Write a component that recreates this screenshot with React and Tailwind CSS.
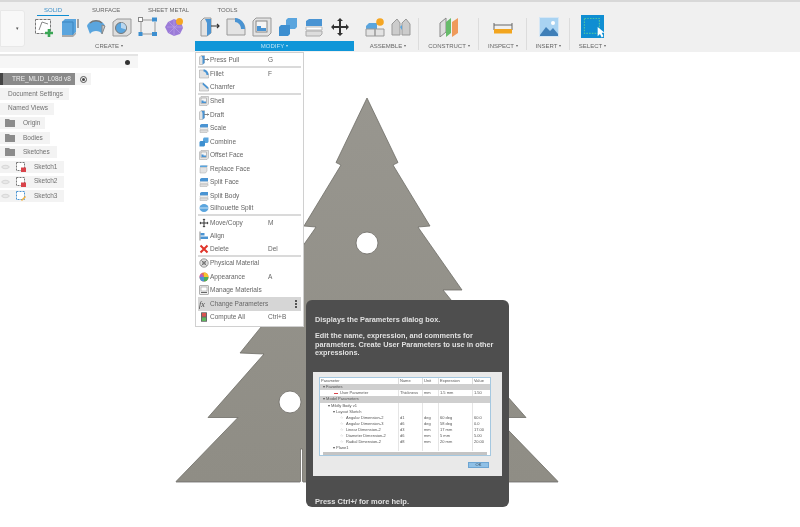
import React from 'react';

const font = { fontFamily: '"Liberation Sans", Arial, sans-serif' };

// toolbar + menu icons, all on a 20x20 box
const icons = {
  sketch: (
    <>
      <rect x="1.5" y="2.5" width="15" height="14" fill="#fff" stroke="#777" strokeDasharray="3 1" />
      <path d="M5 13l3-8 6 2" fill="none" stroke="#888" />
      <path d="M15 12v8M11 16h8" stroke="#3aa655" strokeWidth="2.6" />
    </>
  ),
  extrude: (
    <>
      <path d="M2 5l3-3h11v13l-3 3H2z" fill="#5aa5de" />
      <path d="M2 5h11v13" fill="none" stroke="#3b85c0" />
      <path d="M2 18h11l3-3v2l-3 3H2z" fill="#aaa" />
      <path d="M18 2v9" stroke="#555" />
    </>
  ),
  revolve: (
    <>
      <path d="M1 9c2-7 16-7 18 0l-3 8c-2-4-10-4-12 0z" fill="#5aa5de" />
      <path d="M4 6c3-3 9-3 12 0" fill="none" stroke="#777" strokeWidth="1.4" />
      <path d="M16 8l3 1-3 8z" fill="#ccc" stroke="#888" />
    </>
  ),
  hole: (
    <>
      <path d="M1 5l4-3h14v14l-4 3H1z" fill="#ddd" stroke="#999" />
      <circle cx="9" cy="11" r="5.5" fill="#5aa5de" stroke="#777" />
      <path d="M9 11V5.5a5.5 5.5 0 0 1 5 7z" fill="#b9d6ee" />
    </>
  ),
  pattern: (
    <>
      <path d="M4 3h12M3 5v10M17 5v10M4 17h12" stroke="#999" />
      <rect x="0.5" y="0.5" width="4" height="4" fill="#fff" stroke="#888" />
      <rect x="14" y="0.5" width="5" height="4" fill="#3d8fd0" />
      <rect x="0.5" y="15" width="4" height="4" fill="#3d8fd0" />
      <rect x="14" y="15" width="5" height="4" fill="#3d8fd0" />
    </>
  ),
  mesh: (
    <>
      <path d="M4 5l6-3 7 3 2 6-3 6-6 2-6-3-3-6z" fill="#9b7bd8" />
      <path d="M3 10h16M10 2v17M5 5l11 11M16 5L5 16" stroke="#b9a2e6" strokeWidth="0.7" />
      <circle cx="15.5" cy="4.5" r="3.5" fill="#f5a623" />
    </>
  ),
  presspull: (
    <>
      <path d="M1 4l3-3h7v15l-4 3H1z" fill="#e3e3e3" stroke="#999" />
      <path d="M5 2h6v14l-4 3V6z" fill="#4a94d3" />
      <path d="M11 9h8M17 7l2 2-2 2" fill="none" stroke="#333" strokeWidth="1.2" />
    </>
  ),
  fillet: (
    <>
      <path d="M1 18V2h8c6 0 10 5 10 10v6z" fill="#e3e3e3" stroke="#999" />
      <path d="M9 1c6 0 10 5 10 11h-4c0-4-3-7-6-7z" fill="#4a94d3" />
    </>
  ),
  chamfer: (
    <>
      <path d="M1 18V2h7l11 10v6z" fill="#e3e3e3" stroke="#999" />
      <path d="M8 1l11 10-2 3L7 5z" fill="#4a94d3" />
    </>
  ),
  shell: (
    <>
      <path d="M1 4l3-3h15v15l-3 3H1z" fill="#e3e3e3" stroke="#999" />
      <rect x="4" y="4" width="11" height="11" fill="#f5f5f5" stroke="#888" />
      <path d="M5 9h4v2h5v3H5z" fill="#4a94d3" />
    </>
  ),
  combine: (
    <>
      <path d="M8 3l2-2h9v9l-2 2H8z" fill="#5aa5de" />
      <path d="M1 10l2-2h9v9l-2 2H1z" fill="#3d8fd0" />
    </>
  ),
  replace: (
    <>
      <path d="M2 6l3-3h14l-3 3z" fill="#bbb" />
      <path d="M2 3h14v3H2z" fill="#5aa5de" />
      <path d="M2 7h14v7l-3 4H2z" fill="#e3e3e3" stroke="#aaa" />
    </>
  ),
  split: (
    <>
      <path d="M2 4l3-2h13v7H2z" fill="#4a94d3" />
      <path d="M2 10h16v3H2z" fill="#fff" stroke="#bbb" />
      <path d="M2 14h16v3l-2 2H2z" fill="#ddd" stroke="#aaa" />
    </>
  ),
  move: (
    <path d="M10 1l3 3h-2v5h5V7l3 3-3 3v-2h-5v5h2l-3 3-3-3h2v-5H4v2l-3-3 3-3v2h5V4H7z" fill="#333" />
  ),
  assemble: (
    <>
      <path d="M1 9l3-3h8v6H1z" fill="#5aa5de" />
      <path d="M1 12h9v7H1zM10 12h9v7h-9z" fill="#e3e3e3" stroke="#999" />
      <circle cx="15" cy="5" r="3.8" fill="#f5a623" />
    </>
  ),
  joint: (
    <>
      <path d="M1 18V7l5-5 3 4v12z" fill="#ccc" stroke="#999" />
      <path d="M11 18V6l4-4 4 5v11z" fill="#ccc" stroke="#999" />
      <path d="M9 10l2-2v5z" fill="#5aa5de" />
    </>
  ),
  construct: (
    <>
      <path d="M1 6l6-5v14l-6 5z" fill="#ddd" stroke="#888" />
      <path d="M7 5l5-4v15l-5 4z" fill="#67bb6a" />
      <path d="M13 5l6-4v15l-6 4z" fill="#ef9a5b" />
    </>
  ),
  inspect: (
    <>
      <path d="M1 6v7M19 6v7M1 8h18" stroke="#666" fill="none" />
      <rect x="1" y="12" width="18" height="4.5" fill="#f2a51f" />
    </>
  ),
  insert: (
    <>
      <rect x="0.5" y="0.5" width="19" height="19" fill="#a9d3f2" stroke="#d6e7f5" />
      <path d="M1 18l6-8 4 4 3-3 5 6v2H1z" fill="#3f7fb8" />
      <circle cx="14" cy="6" r="2" fill="#fff" />
    </>
  ),
  select: (
    <>
      <rect width="20" height="20" fill="#0f8ed2" />
      <rect x="3" y="3" width="13" height="13" fill="none" stroke="#4cc2a6" strokeDasharray="1.4 1" />
      <path d="M14.5 10.5v8l2-2 1.5 3 1.5-1-1.5-3h2.5z" fill="#fff" />
    </>
  ),
  physical: (
    <>
      <circle cx="10" cy="10" r="8.5" fill="#ddd" stroke="#555" />
      <circle cx="10" cy="10" r="3" fill="#fff" stroke="#555" />
      <path d="M5 5l10 10M15 5L5 15" stroke="#555" strokeWidth="1.5" />
    </>
  ),
  appearance: (
    <>
      <circle cx="10" cy="10" r="9" fill="#e9734d" />
      <path d="M10 10V1a9 9 0 0 1 9 9z" fill="#f4c430" />
      <path d="M10 10h9a9 9 0 0 1-9 9z" fill="#4cae5a" />
      <path d="M10 10v9a9 9 0 0 1-9-9z" fill="#4a94d3" />
      <path d="M10 10H1a9 9 0 0 1 4-7z" fill="#b15dc6" />
    </>
  ),
  materials: (
    <>
      <rect x="1.5" y="1.5" width="17" height="17" fill="#eee" stroke="#666" />
      <rect x="4" y="4" width="12" height="8" fill="#fff" stroke="#888" />
      <path d="M4 15h12" stroke="#666" strokeWidth="2" />
    </>
  ),
  compute: (
    <>
      <rect x="4" y="0.5" width="12" height="19" rx="1" fill="#666" />
      <rect x="6" y="2" width="8" height="7" fill="#d9534f" />
      <rect x="6" y="11" width="8" height="7" fill="#5cb85c" />
    </>
  ),
  align: (
    <>
      <path d="M2 1v18" stroke="#555" strokeWidth="1.4" />
      <rect x="3" y="4" width="8" height="5" fill="#4a94d3" />
      <rect x="3" y="11" width="15" height="5" fill="#4a94d3" />
    </>
  ),
  deleteX: <path d="M3 3l14 14M17 3L3 17" stroke="#e0352b" strokeWidth="4" />,
  silhouette: (
    <>
      <ellipse cx="10" cy="10" rx="9" ry="8" fill="#5aa5de" />
      <path d="M1 10h18" stroke="#fff" strokeWidth="1.4" />
    </>
  ),
  fx: <text x="0" y="16" fontSize="16" fontStyle="italic" fill="#444" style={{ fontFamily: '"Liberation Serif", serif' }}>fx</text>,
};

function Icon({ name, size = 20 }) {
  return (
    <svg width={size} height={size} viewBox="0 0 20 20" className="shrink-0">
      {icons[name]}
    </svg>
  );
}

const groups = [
  { label: 'CREATE', width: 'w-[166px]', icons: ['sketch', 'extrude', 'revolve', 'hole', 'pattern', 'mesh'] },
  { label: 'MODIFY', width: 'w-[159px] ml-[3px]', icons: ['presspull', 'fillet', 'shell', 'combine', 'split', 'move'], active: true },
  { label: 'ASSEMBLE', width: 'w-[62px] ml-[3px]', icons: ['assemble', 'joint'], divider: true },
  { label: 'CONSTRUCT', width: 'w-[60px]', icons: ['construct'], divider: true },
  { label: 'INSPECT', width: 'w-[48px]', icons: ['inspect'], divider: true },
  { label: 'INSERT', width: 'w-[43px]', icons: ['insert'], divider: true },
  { label: 'SELECT', width: 'w-[45px]', icons: ['select'], big: true },
];

const tabs = [
  { label: 'SOLID', className: 'w-[32px] ml-[37px] text-[#3a8fc9] border-b border-[#0f8ed2]' },
  { label: 'SURFACE', className: 'w-[28px] ml-[23px] text-[#666]' },
  { label: 'SHEET METAL', className: 'w-[41px] ml-[28px] text-[#666]' },
  { label: 'TOOLS', className: 'w-[21px] ml-[28px] text-[#666]' },
];

function Toolbar() {
  return (
    <div className="h-[52px] bg-[#f0f0f0] border-t-2 border-[#d8d8d8] flex flex-col shrink-0">
      <div className="flex h-[14px] items-stretch">
        {tabs.map((tab) => (
          <div key={tab.label} className={`${tab.className} h-[14px] pt-[5px] text-[6px] leading-[7px] text-center whitespace-nowrap`}>
            {tab.label}
          </div>
        ))}
      </div>
      <div className="flex flex-1">
        <div className="w-[26px] flex items-start">
          <div className="w-[25px] h-[37px] -mt-[6px] bg-[#f8f8f8] border border-[#e8e8e8] rounded-r-[3px] flex items-center justify-end pr-[5px] text-[5px] text-[#555]">
            ▾
          </div>
        </div>
        {groups.map((group) => (
          <div key={group.label} className={`${group.width} flex flex-col relative`}>
            <div className={`flex justify-center gap-[6px] h-[23px] ${group.big ? '-mt-[1px]' : 'pt-[1px]'}`}>
              {group.icons.map((name, i) => (
                <Icon key={i} name={name} size={group.big ? 23 : 20} />
              ))}
            </div>
            <div
              className={`h-[10px] flex items-center justify-center text-[6px] whitespace-nowrap ${group.big ? 'mt-[3px]' : 'mt-[2px]'} ${
                group.active ? 'bg-[#0f96d8] text-[#bfe3f5]' : 'text-[#666]'
              }`}
            >
              {group.label} <span className="ml-[2px] text-[4px]">▾</span>
            </div>
            {group.divider && <div className="absolute right-0 top-[2px] h-[32px] border-r border-[#dcdcdc]" />}
          </div>
        ))}
      </div>
    </div>
  );
}

function Folder() {
  return (
    <svg width="10" height="8" viewBox="0 0 10 8" className="shrink-0">
      <path d="M0 0h4l1 1h5v7H0z" fill="#8c8c8c" />
    </svg>
  );
}

function Eye() {
  return (
    <svg width="9" height="6" viewBox="0 0 9 6" className="shrink-0">
      <path d="M0.5 3C2 0.8 7 0.8 8.5 3 7 5.2 2 5.2 0.5 3z" fill="#e8e8e8" stroke="#d4d4d4" />
    </svg>
  );
}

function SketchBadge({ blue }) {
  return (
    <svg width="10" height="10" viewBox="0 0 10 10" className="shrink-0 ml-[6px]">
      <rect x="0.5" y="0.5" width="8" height="8" fill="#fff" stroke={blue ? '#4a94d3' : '#777'} strokeDasharray="2 1" />
      {blue ? <path d="M5 9l4-4 1 1-4 4z" fill="#f5b13d" /> : <rect x="5" y="5.5" width="5" height="4.5" fill="#d9434a" />}
    </svg>
  );
}

function Browser() {
  return (
    <div className="w-[138px] flex flex-col text-[6.5px] text-[#707070] leading-none">
      <div className="h-[14px] mt-[2px] bg-[#f6f6f6] border-t-2 border-[#e4e4e4] flex items-center justify-end pr-[8px]">
        <span className="w-[5px] h-[5px] rounded-full bg-[#333]" />
      </div>
      <div className="mt-[5px] flex items-stretch h-[12px]">
        <div className="w-[3px] bg-[#444]" />
        <div className="w-[72px] bg-[#8a8a8a] text-[#eee] flex items-center pl-[9px]">TRE_MLID_L08d v8</div>
        <div className="w-[16px] bg-[#f3f3f3] flex items-center justify-center">
          <span className="w-[7px] h-[7px] rounded-full border border-[#555] flex items-center justify-center">
            <span className="w-[3px] h-[3px] rounded-full bg-[#444]" />
          </span>
        </div>
      </div>
      <div className="mt-[3px] flex flex-col gap-[2.6px]">
        <div className="h-[12px] w-[69px] bg-[#f3f3f3] flex items-center pl-[8px]">Document Settings</div>
        <div className="h-[12px] w-[54px] bg-[#f3f3f3] flex items-center pl-[8px]">Named Views</div>
        {[
          ['Origin', 'w-[45px]'],
          ['Bodies', 'w-[50px]'],
          ['Sketches', 'w-[57px]'],
        ].map(([label, width]) => (
          <div key={label} className={`h-[12px] ${width} bg-[#f3f3f3] flex items-center pl-[5px] gap-[8px]`}>
            <Folder />
            {label}
          </div>
        ))}
        {['Sketch1', 'Sketch2', 'Sketch3'].map((label, i) => (
          <div key={label} className="h-[12px] w-[64px] bg-[#f3f3f3] flex items-center pl-[1px]">
            <Eye />
            <SketchBadge blue={i === 2} />
            <span className="ml-[8px]">{label}</span>
          </div>
        ))}
      </div>
    </div>
  );
}

const menuRows = [
  { icon: 'presspull', label: 'Press Pull', key: 'G', sep: true },
  { icon: 'fillet', label: 'Fillet', key: 'F' },
  { icon: 'chamfer', label: 'Chamfer', sep: true },
  { icon: 'shell', label: 'Shell' },
  { icon: 'presspull', label: 'Draft' },
  { icon: 'split', label: 'Scale' },
  { icon: 'combine', label: 'Combine' },
  { icon: 'shell', label: 'Offset Face' },
  { icon: 'replace', label: 'Replace Face' },
  { icon: 'split', label: 'Split Face' },
  { icon: 'split', label: 'Split Body' },
  { icon: 'silhouette', label: 'Silhouette Split', sep: true },
  { icon: 'move', label: 'Move/Copy', key: 'M' },
  { icon: 'align', label: 'Align' },
  { icon: 'deleteX', label: 'Delete', key: 'Del', sep: true },
  { icon: 'physical', label: 'Physical Material' },
  { icon: 'appearance', label: 'Appearance', key: 'A' },
  { icon: 'materials', label: 'Manage Materials' },
  { icon: 'fx', label: 'Change Parameters', active: true },
  { icon: 'compute', label: 'Compute All', key: 'Ctrl+B' },
];

function ModifyMenu() {
  return (
    <div className="absolute left-[195px] top-[52px] w-[109px] h-[275px] bg-white border border-[#d0d0d0] pt-[1px] px-[2px] text-[6.5px] leading-none text-[#666]">
      {menuRows.map((row) => (
        <div
          key={row.label}
          className={`relative h-[13.5px] flex items-center pl-[1px] ${row.active ? 'bg-[#d6d6d6]' : ''} ${
            row.sep ? 'border-b-2 border-[#dadada]' : ''
          }`}
        >
          <Icon name={row.icon} size={10} />
          <span className="ml-[1px] whitespace-nowrap">{row.label}</span>
          {row.key && <span className="absolute left-[70px]">{row.key}</span>}
          {row.active && (
            <span className="absolute right-[4px] top-[3px] flex flex-col gap-[1px]">
              <span className="w-[2px] h-[2px] bg-[#555]" />
              <span className="w-[2px] h-[2px] bg-[#555]" />
              <span className="w-[2px] h-[2px] bg-[#555]" />
            </span>
          )}
        </div>
      ))}
    </div>
  );
}

const paramRows = [
  { name: '▾ Favorites', group: true },
  { name: 'User Parameter', indent: 'pl-[20px]', cells: ['Thickness', 'mm', '1.5 mm', '1.50'], red: true },
  { name: '▾ Model Parameters', group: true },
  { name: '▾ Mildly Body v1', indent: 'pl-[8px]', cells: ['', '', '', ''] },
  { name: '▾ Layout Sketch', indent: 'pl-[13px]', cells: ['', '', '', ''] },
  { name: 'Angular Dimension-2', indent: 'pl-[26px]', cells: ['d1', 'deg', '60 deg', '60.0'], star: true },
  { name: 'Angular Dimension-3', indent: 'pl-[26px]', cells: ['d6', 'deg', '58 deg', '0.0'], star: true },
  { name: 'Linear Dimension-2', indent: 'pl-[26px]', cells: ['d3', 'mm', '17 mm', '17.00'], star: true },
  { name: 'Diameter Dimension-2', indent: 'pl-[26px]', cells: ['d6', 'mm', '5 mm', '5.00'], star: true },
  { name: 'Radial Dimension-2', indent: 'pl-[26px]', cells: ['d8', 'mm', '20 mm', '20.00'], star: true },
  { name: '▾ Plane1', indent: 'pl-[13px]', cells: ['', '', '', ''] },
];

const cols = 'grid grid-cols-[79px_24px_16px_34px_18px]';

function ParamsPreview() {
  return (
    <div className="mt-[15px] mx-[7px] h-[104px] bg-[#e9e9e9] pt-[5px] px-[6px]">
      <div className="h-[79px] w-[172px] bg-white border border-[#a5c8e0] text-[4px] leading-[6.1px] text-[#555] overflow-hidden">
        <div className={`${cols} h-[6.1px]`}>
          {['Parameter', 'Name', 'Unit', 'Expression', 'Value'].map((h) => (
            <div key={h} className="pl-[1px] border-r border-[#ddd] whitespace-nowrap">{h}</div>
          ))}
        </div>
        {paramRows.map((row) =>
          row.group ? (
            <div key={row.name} className="h-[6.1px] bg-[#cfcfcf] pl-[3px] whitespace-nowrap">{row.name}</div>
          ) : (
            <div key={row.name} className={`${cols} h-[6.1px]`}>
              <div className={`${row.indent} relative whitespace-nowrap border-r border-[#e5e5e5]`}>
                {row.star && <span className="absolute left-[20px] text-[#aaa]">☆</span>}
                {row.red && <span className="absolute left-[14px] top-[3px] w-[4px] h-[1px] bg-[#d9434a]" />}
                {row.name}
              </div>
              {row.cells.map((cell, i) => (
                <div key={i} className="pl-[1px] border-r border-[#e5e5e5] whitespace-nowrap">{cell}</div>
              ))}
            </div>
          ),
        )}
        <div className="h-[3px] mx-[3px] mt-[1px] bg-[#c4c4c4]" />
      </div>
      <div className="flex justify-end mt-[6px] pr-[7px]">
        <div className="w-[21px] h-[6px] bg-[#8fc0e6] border border-[#6da5d2] text-[4px] leading-[4px] text-center text-[#345]">OK</div>
      </div>
    </div>
  );
}

function Tooltip() {
  return (
    <div className="absolute left-[306px] top-[300px] w-[203px] h-[207px] rounded-[6px] bg-[#4e4e4e] flex flex-col">
      <div className="pt-[16px] pl-[9px] pr-[8px] text-[7.3px] leading-[8.3px] font-bold text-[#e0e0e0]">
        <p>Displays the Parameters dialog box.</p>
        <p className="mt-[8px]">
          Edit the name, expression, and comments for parameters. Create User Parameters to use in other expressions.
        </p>
      </div>
      <ParamsPreview />
      <div className="mt-auto pl-[9px] text-[7.5px] leading-[10px] font-bold text-[#e0e0e0]">Press Ctrl+/ for more help.</div>
    </div>
  );
}

function Tree() {
  const outline =
    'M367 98L398 162.5L393 165L430 226L418 227L420 230L462 290L443 290L494 353L470 354L526 417.5L496 417.5L558 481.5L302.5 481.5L302.5 449L300.5 449L300.5 481.5L176 481.5L238 417.5L208 417.5L264 354L240 353L291 290L272 290L314 230L316 227L304 226L341 165L336 162.5Z';
  return (
    <svg className="absolute left-0 top-0" width="800" height="527" viewBox="0 0 800 527">
      <defs>
        <linearGradient id="treeFill" x1="0" y1="0" x2="0" y2="1">
          <stop offset="0" stopColor="#98968f" />
          <stop offset="1" stopColor="#8f8d85" />
        </linearGradient>
      </defs>
      <path d="M176 482.5H300M303 482.5H558" stroke="#c4c4c4" strokeWidth="1.2" />
      <path d={outline} fill="url(#treeFill)" stroke="#6f6d67" strokeWidth="0.8" />
      <circle cx="367" cy="243" r="11" fill="#fff" stroke="#74726c" strokeWidth="0.9" />
      <circle cx="290" cy="402" r="11" fill="#fff" stroke="#74726c" strokeWidth="0.9" />
    </svg>
  );
}

export default function App() {
  return (
    <div className="relative w-[800px] h-[527px] overflow-hidden bg-white flex flex-col blur-[0.5px]" style={font}>
      <Tree />
      <div className="relative flex flex-col">
        <Toolbar />
        <Browser />
      </div>
      <ModifyMenu />
      <Tooltip />
    </div>
  );
}
